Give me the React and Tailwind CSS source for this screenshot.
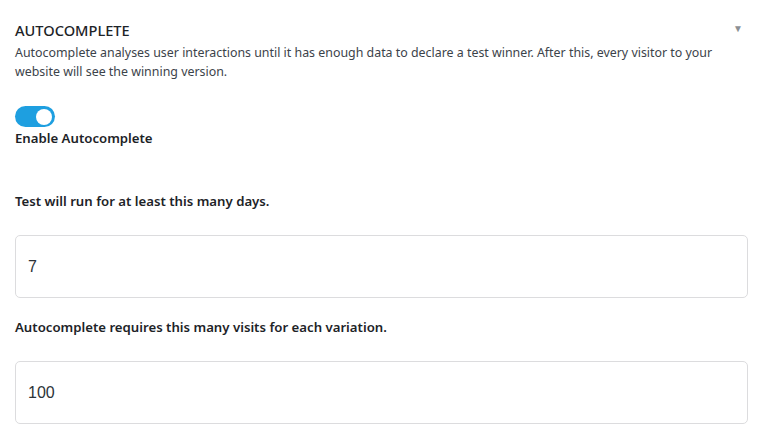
import { useState } from 'react';

const Toggle = ({ on, onChange }) => (
    <button
        type="button"
        onClick={() => onChange(!on)}
        className={`flex h-[21px] w-[40px] items-center rounded-full px-[3px] ${on ? 'justify-end bg-[#1e9fe0]' : 'justify-start bg-[#c3c4c7]'}`}
    >
        <span className="block h-[16px] w-[16px] rounded-full bg-white" />
    </button>
);

const NumberField = ({ label, value, onChange }) => (
    <div className="flex flex-col">
        <label className="text-[13.2px] font-semibold leading-[19px] text-[#1d2327]">{label}</label>
        <input
            type="text"
            value={value}
            onChange={(e) => onChange(e.target.value)}
            className="mt-[24px] h-[63px] w-full rounded-[5px] border border-[#dcdcde] bg-white px-[12px] text-[16px] text-[#2c3338] outline-none font-['Liberation_Sans',Arial,sans-serif]"
        />
    </div>
);

export default function App() {
    const [enabled, setEnabled] = useState(true);
    const [days, setDays] = useState('7');
    const [visits, setVisits] = useState('100');

    return (
        <div className="min-h-screen bg-white pl-[15px] pr-[9px] pt-[20px] font-['Noto_Sans','Open_Sans',sans-serif] text-[#3c434a]">
            <div className="flex items-start justify-between pr-[5px]">
                <h2 className="text-[14.6px] font-medium leading-[20px] text-[#1d2327]">AUTOCOMPLETE</h2>
                <span className="mt-[1px] text-[10px] text-[#8c8f94]">▼</span>
            </div>
            <p className="mt-[3px] text-[12.4px] leading-[19px]">
                Autocomplete analyses user interactions until it has enough data to declare a test winner. After this, every visitor to your website will see the winning version.
            </p>

            <div className="mt-[25px]">
                <Toggle on={enabled} onChange={setEnabled} />
            </div>
            <div className="mt-[2px] text-[13.2px] font-semibold leading-[19px] text-[#1d2327]">Enable Autocomplete</div>

            <div className="mt-[44px] flex flex-col gap-[20px]">
                <NumberField label="Test will run for at least this many days." value={days} onChange={setDays} />
                <NumberField label="Autocomplete requires this many visits for each variation." value={visits} onChange={setVisits} />
            </div>
        </div>
    );
}
